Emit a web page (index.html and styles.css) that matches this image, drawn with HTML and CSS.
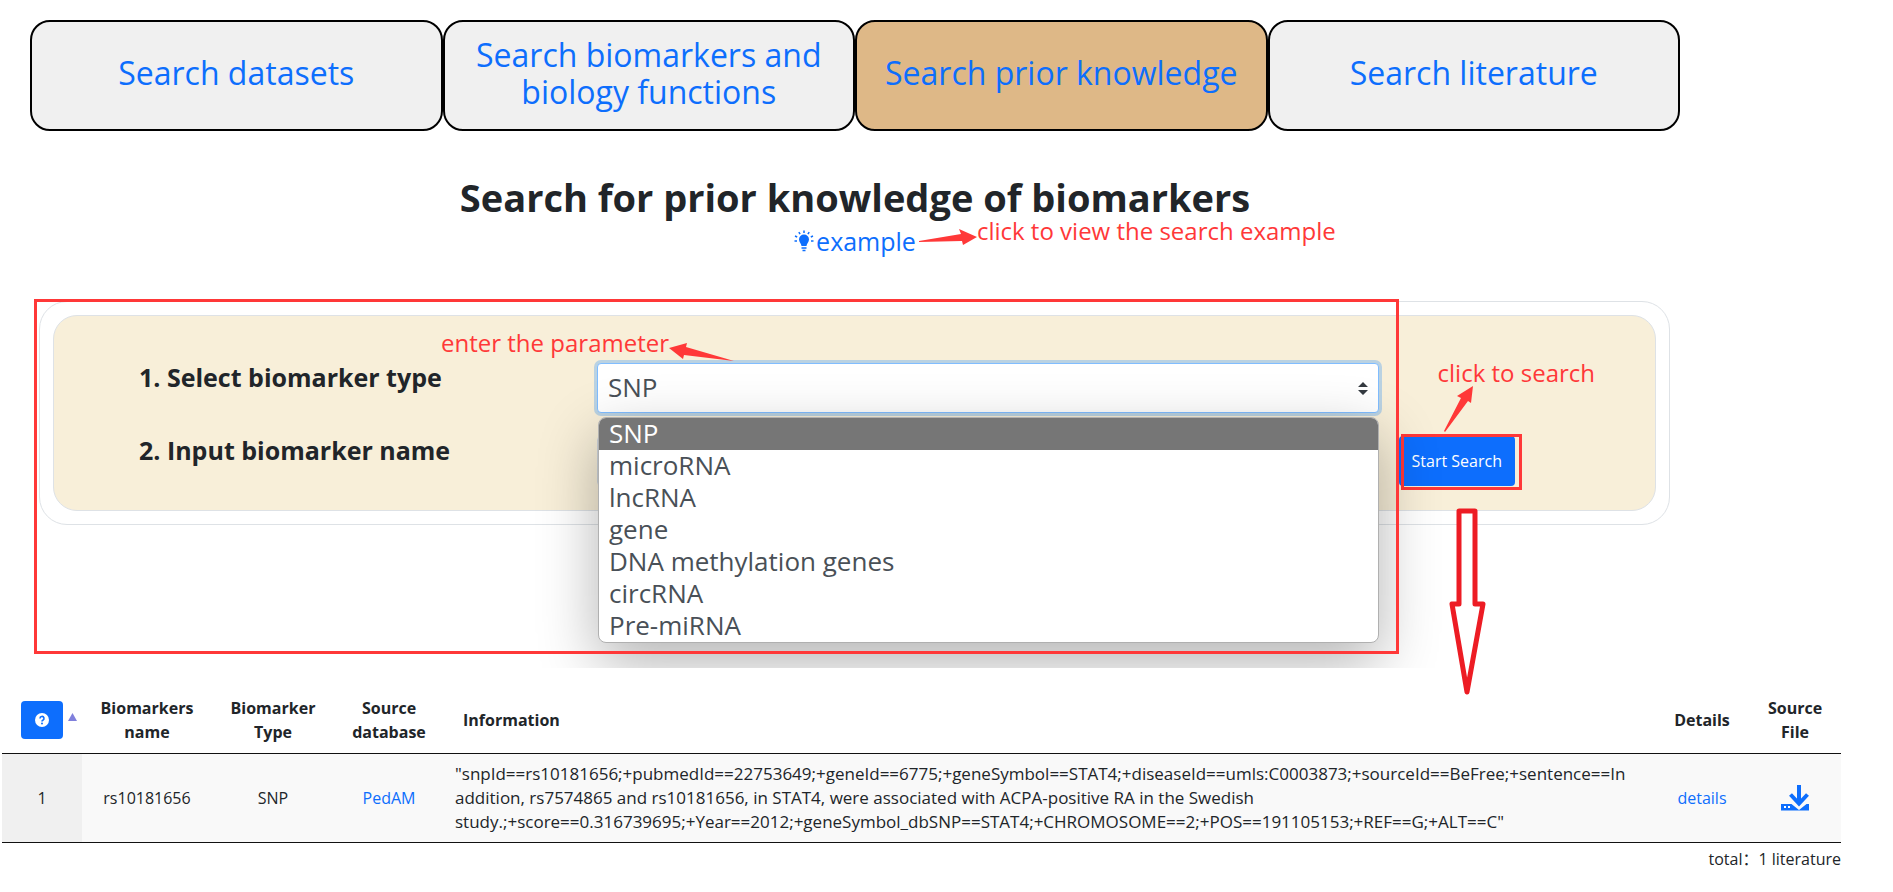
FILE: index.html
```html
<!DOCTYPE html>
<html lang="en">
<head>
  <meta charset="UTF-8" />
  <meta name="viewport" content="width=device-width, initial-scale=1.0"/>
  <title>Search prior knowledge</title>
  <link rel="stylesheet" href="styles.css">
</head>
<body>

  <div class="search-page">
    <nav class="tabs">
      <a href="#datasets" class="tab">Search datasets</a>
      <a href="#biomarkers" class="tab">Search biomarkers and biology functions</a>
      <a href="#prior" class="tab active">Search prior knowledge</a>
      <a href="#literature" class="tab">Search literature</a>
    </nav>

    <header class="title">
      <h1>Search for prior knowledge of biomarkers</h1>
      <div class="example">
        <a href="#example">
          <svg class="bulb" viewBox="0 0 20 22" width="20" height="22">
            <path d="M10 4.500a5 5 0 0 0-5 5c0 2.700 2.200 3.900 2.500 6.500h5c.3-2.600 2.500-3.800 2.500-6.500a5 5 0 0 0-5-5z" fill="currentColor"/>
            <path d="M7.500 18h5M8.500 20.500h3M10 .5v2.500M4.800 2.200l1.300 2M15.200 2.200l-1.300 2M1 6l2.200 1M19 6l-2.200 1M.5 11h2.500M17 11h2.500" stroke="currentColor" stroke-width="1.500" fill="none"/>
          </svg>example</a>
        <div class="note note-example">
          <svg width="58" height="18" viewBox="0 0 58 18"><path d="M0 13L42 6 40 1 58 9 44 17 43 13 0 14z" fill="#ff3838"/></svg>
          <span>click to view the search example</span>
        </div>
      </div>
    </header>

    <form class="card">
      <div class="panel">
        <label for="type">1. Select biomarker type</label>
        <div class="field">
          <select id="type">
            <option>SNP</option>
            <option>microRNA</option>
            <option>lncRNA</option>
            <option>gene</option>
            <option>DNA methylation genes</option>
            <option>circRNA</option>
            <option>Pre-miRNA</option>
          </select>
          <svg class="caret" width="10" height="13" viewBox="0 0 10 13"><path d="M0 5l5-5 5 5zM0 8l5 5 5-5z" fill="#343a40"/></svg>
          <ul class="options">
            <li class="selected">SNP</li>
            <li>microRNA</li>
            <li>lncRNA</li>
            <li>gene</li>
            <li>DNA methylation genes</li>
            <li>circRNA</li>
            <li>Pre-miRNA</li>
          </ul>
          <div class="note note-parameter">
            <span>enter the parameter</span>
            <svg width="65" height="18" viewBox="0 0 65 18"><path d="M0 5L18 0 17 4 65 18 15 12 14 16z" fill="#ff3838"/></svg>
          </div>
        </div>
        <label for="name">2. Input biomarker name</label>
        <div class="field">
          <input type="text" id="name">
        </div>
        <div class="submit">
          <button type="button">Start Search</button>
          <div class="mark-button"></div>
          <div class="note note-search">
            <span>click to search</span>
            <svg width="30" height="46" viewBox="0 0 30 46"><path d="M29 0L27 17 24 15 1 46 0 45 17 12 13 10z" fill="#ff3838"/></svg>
          </div>
        </div>
      </div>
    </form>
    <div class="mark-form"></div>
  </div>

  <div class="results">
    <svg class="down-arrow" width="38" height="190" viewBox="0 0 38 190">
      <path d="M10 3h16v93h8L18 184 3 96h7z" fill="#fff" stroke="#ed1c24" stroke-width="5" stroke-linejoin="round"/>
    </svg>
    <table>
      <thead>
        <tr>
          <th class="col-index">
            <div class="sort">
              <button type="button" class="help" aria-label="Help">
                <svg width="14" height="14" viewBox="0 0 14 14"><circle cx="7" cy="7" r="7" fill="#fff"/><path d="M5 5.400a2 2 0 1 1 2.900 1.800c-.6.300-.9.600-.9 1.300" stroke="#0d6efd" stroke-width="1.600" fill="none"/><circle cx="7" cy="10.600" r="1" fill="#0d6efd"/></svg>
              </button>
              <svg class="asc" width="9" height="8" viewBox="0 0 9 8"><path d="M0 8L4.500 0 9 8z" fill="#8080dc"/></svg>
            </div>
          </th>
          <th class="col-name">Biomarkers name</th>
          <th class="col-type">Biomarker Type</th>
          <th class="col-source">Source database</th>
          <th class="col-info">Information</th>
          <th class="col-details">Details</th>
          <th class="col-file">Source File</th>
        </tr>
      </thead>
      <tbody>
        <tr>
          <td class="index">1</td>
          <td>rs10181656</td>
          <td>SNP</td>
          <td><a href="#pedam">PedAM</a></td>
          <td class="info">"snpId==rs10181656;+pubmedId==22753649;+geneId==6775;+geneSymbol==STAT4;+diseaseId==umls:C0003873;+sourceId==BeFree;+sentence==In<br>addition, rs7574865 and rs10181656, in STAT4, were associated with ACPA-positive RA in the Swedish<br>study.;+score==0.316739695;+Year==2012;+geneSymbol_dbSNP==STAT4;+CHROMOSOME==2;+POS==191105153;+REF==G;+ALT==C"</td>
          <td><a href="#details">details</a></td>
          <td>
            <a href="#download" aria-label="Download">
              <svg class="download" width="28" height="26" viewBox="0 0 28 26"><path d="M0 19h10.500l7.500 6 7.500-6H28v6.500H0z" fill="currentColor"/><path d="M18 0v19M9.500 9.500L18 18.500l8.500-9" stroke="currentColor" stroke-width="4" fill="none"/><path d="M11.500 17.500l6.500 5.500 6.500-5.500" stroke="#f9f9f9" fill="none"/><path d="M3 21h2v2H3zM7 21h2v2H7z" fill="#fff"/></svg>
            </a>
          </td>
        </tr>
      </tbody>
    </table>
    <p class="total">total：1 literature</p>
  </div>

</body>
</html>
```
FILE: styles.css
```css
body {
  margin: 0;
  font-family: "Open Sans", "Noto Sans CJK SC", sans-serif;
  font-size: 16px;
  line-height: 24px;
  color: #212529;
  background-color: #fff;
}

a {
  color: #0d6efd;
  text-decoration: none;
}

svg {
  display: block;
}

/* search area, cuts the menu shadow at its bottom edge */
.search-page {
  position: relative;
  overflow: hidden;
  padding: 20px 213px 143px 30px;
}

.tabs {
  display: flex;
}

.tab {
  flex: 1 1 0;
  box-sizing: border-box;
  height: 111px;
  padding: 0 24px 6px;
  display: flex;
  align-items: center;
  justify-content: center;
  text-align: center;
  font-size: 32px;
  line-height: 37px;
  border: 2px solid #000;
  border-radius: 20px;
  background-color: #f0f0f0;
}

.tab.active {
  background-color: #deb887;
}

.title {
  padding-top: 42px;
  text-align: center;
}

.title h1 {
  margin: 0;
  font-size: 38px;
  font-weight: 700;
  line-height: 48px;
}

.example {
  position: relative;
  display: inline-block;
  font-size: 25px;
  line-height: 40px;
}

.example a {
  display: flex;
  align-items: center;
  gap: 2px;
}

.note {
  position: absolute;
  display: flex;
  font-size: 24px;
  line-height: 32px;
  color: #ff3838;
  white-space: nowrap;
}

.note-example {
  left: 100%;
  top: -6px;
  align-items: center;
  padding-left: 3px;
}

.note-example svg {
  margin-top: 12px;
}

.card {
  margin: 40px 10px 0 9px;
  padding: 13px;
  border: 1px solid #dee2e6;
  border-radius: 28px;
}

.panel {
  position: relative;
  display: grid;
  grid-template-columns: 458px 1fr;
  row-gap: 23px;
  padding: 47px 276px 24px 85px;
  border: 1px solid #dee2e6;
  border-radius: 24px;
  background-color: #f8efd9;
}

.panel label {
  font-size: 25px;
  font-weight: 700;
  line-height: 28px;
}

.field {
  position: relative;
}

select,
input {
  display: block;
  width: 100%;
  height: 50px;
  box-sizing: border-box;
  padding: 0 10px 2px;
  font: inherit;
  font-size: 26px;
  color: #495057;
  background-color: #fff;
  border: 1px solid #ced4da;
  border-radius: 4px;
}

select {
  appearance: none;
  border-color: #80bdff;
  box-shadow: 0 0 0 3px rgba(0, 123, 255, 0.25);
}

.caret {
  position: absolute;
  right: 11px;
  top: 19px;
}

.options {
  position: absolute;
  z-index: 2;
  left: 1px;
  right: 0;
  top: 54px;
  margin: 0;
  padding: 0;
  list-style: none;
  overflow: hidden;
  font-size: 26px;
  line-height: 30px;
  color: #495057;
  background-color: #fff;
  border: 1px solid #b0b0b0;
  border-radius: 8px;
  box-shadow: 0 20px 60px rgba(0, 0, 0, 0.3);
}

.options li {
  padding: 0 10px 2px;
}

.options .selected {
  color: #fff;
  background-color: #767676;
}

.note-parameter {
  right: 100%;
  top: -36px;
  margin-right: -137px;
}

.note-parameter svg {
  margin-top: 16px;
}

.submit {
  position: absolute;
  right: 140px;
  bottom: 24px;
}

.submit button {
  height: 50px;
  padding: 0 13px;
  font: inherit;
  color: #fff;
  background-color: #0d6efd;
  border: none;
  border-radius: 4px;
}

.mark-form,
.mark-button {
  position: absolute;
  border: 3px solid #ff3838;
  pointer-events: none;
}

.mark-form {
  z-index: 3;
  left: 34px;
  right: 494px;
  top: 299px;
  bottom: 14px;
}

.mark-button {
  left: 2px;
  right: -7px;
  top: -2px;
  bottom: -4px;
}

.note-search {
  left: 39px;
  bottom: 54px;
  flex-direction: column;
}

.note-search svg {
  margin: -3px 0 0 6px;
}

.results {
  position: relative;
  padding: 18px 52px 0 2px;
}

.down-arrow {
  position: absolute;
  z-index: 4;
  right: 406px;
  top: -160px;
}

table {
  width: 100%;
  table-layout: fixed;
  border-collapse: collapse;
  text-align: center;
}

th {
  height: 67px;
  padding: 0 16px;
  font-weight: 700;
  border-bottom: 1px solid #111;
}

td {
  height: 72px;
  padding: 8px 11px;
  background-color: #f9f9f9;
  border-bottom: 1px solid #111;
}

.col-index {
  width: 80px;
  padding: 0;
}

.col-name {
  width: 98px;
}

.col-type {
  width: 90px;
}

.col-source {
  width: 78px;
}

.col-info {
  padding-left: 19px;
  text-align: left;
}

.col-details {
  width: 78px;
  padding: 0 8px;
}

.col-file {
  width: 60px;
}

.sort {
  display: flex;
  gap: 5px;
  padding-left: 19px;
}

.help {
  width: 42px;
  height: 38px;
  display: flex;
  align-items: center;
  justify-content: center;
  padding: 0;
  background-color: #0d6efd;
  border: none;
  border-radius: 4px;
}

.asc {
  margin-top: 12px;
}

td.index {
  background-color: #f0f0f0;
}

td.info {
  font-size: 17px;
  text-align: left;
  white-space: nowrap;
}

.download {
  margin: 0 auto;
}

.total {
  margin: 4px 0 0;
  text-align: right;
}
```
